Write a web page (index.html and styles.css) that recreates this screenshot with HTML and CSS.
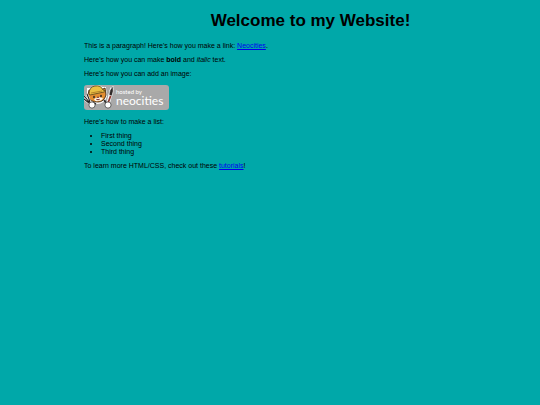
FILE: index.html
```html
<!DOCTYPE html>
<html lang="en">
<head>
<meta charset="utf-8">
<title>My Website</title>
<link rel="stylesheet" href="styles.css">
</head>
<body>
<h1>Welcome to my Website!</h1>
<p>This is a paragraph! Here's how you make a link: <a href="#">Neocities</a>.</p>
<p>Here's how you can make <strong>bold</strong> and <em>italic</em> text.</p>
<p>Here's how you can add an image:</p>
<div class="badge">
  <svg class="cat" viewBox="0 0 31 25" aria-hidden="true">
    <path d="M4 9L4 4L8 4Q13-1 18 3L21 3L22 11Q20 18 13 18Q6 18 4 13Z" fill="#fff" stroke="#fff" stroke-width="2"/>
    <path d="M4 10L5 5L8 6L17 5L21 3L22 10Q20 17 14 17Q6 17 4 12Z" fill="#e38f32" stroke="#402711" stroke-width=".9"/>
    <path d="M5 9Q5 2 11 1Q17 0 19 5L22 6L20 7L6 10Z" fill="#e9c044" stroke="#594319" stroke-width=".8"/>
    <path d="M7 8L18 6" stroke="#a87422" stroke-width=".8"/>
    <path d="M10 14Q14 11 19 13Q18 16 14 16Q11 17 10 14Z" fill="#fff5e7"/>
    <ellipse cx="10" cy="12" rx=".8" ry="1.2" fill="#222"/>
    <ellipse cx="17" cy="11" rx=".8" ry="1.2" fill="#222"/>
    <path d="M13 12H15L14 13ZM12 14Q14 16 16 14" fill="#733" stroke="#733" stroke-width=".5"/>
    <path d="M0 11L2 13L5 17M3 9L5 14L6 18M0 14L5 18" fill="none" stroke="#fff" stroke-width="2.2"/>
    <path d="M0 11L2 13L5 17M3 9L5 14L6 18M0 14L5 18" fill="none" stroke="#222" stroke-width="1.1"/>
    <path d="M7 21L10 18L12 19" stroke="#333" stroke-width="1.5" fill="none"/>
    <circle cx="8" cy="20" r="3.1" fill="#fff" stroke="#333" stroke-width=".7"/>
    <path d="M20 15L23 19" fill="none" stroke="#333" stroke-width="1.8"/>
    <path d="M24 19L28 3" stroke="#fff" stroke-width="3.5"/>
    <path d="M24 18L27 10" stroke="#933d32" stroke-width="1.8"/>
    <path d="M25 10Q25 5 29 1Q30 6 28 11Z" fill="#302a29" stroke="#fff" stroke-width=".6"/>
    <circle cx="24" cy="20" r="3.1" fill="#fff" stroke="#333" stroke-width=".7"/>
  </svg>
  <span class="label"><span class="hosted">hosted by</span><span class="brand">neocities</span></span>
</div>
<p>Here's how to make a list:</p>
<ul>
  <li>First thing</li>
  <li>Second thing</li>
  <li>Third thing</li>
</ul>
<p>To learn more HTML/CSS, check out these <a href="#">tutorials</a>!</p>
</body>
</html>
```
FILE: styles.css
```css
body {
  margin: 0 3px 0 84px;
  background: #00a8a9;
  color: #000;
  font: 7px/8px "Liberation Sans", Arial, sans-serif;
}
h1 {
  margin: 11px 0 12px;
  font-size: 17px;
  line-height: 19px;
  text-align: center;
}
p {
  margin: 6px 0;
}
a {
  color: #00e;
}
.badge {
  display: flex;
  width: 85px;
  height: 25px;
  margin: 7px 0 8px;
  border-radius: 3px;
  background: #a9a9a9;
  color: #fff;
}
.cat {
  flex: none;
  width: 31px;
  height: 25px;
}
.label {
  display: flex;
  flex-direction: column;
  padding-top: 3px;
  padding-left: 1px;
  font-family: Lato, "Noto Sans", sans-serif;
}
.hosted {
  font-size: 6px;
  line-height: 8px;
}
.brand {
  font-size: 12px;
  line-height: 9px;
}
ul {
  margin: 6px 0;
  padding-left: 17px;
}
```
